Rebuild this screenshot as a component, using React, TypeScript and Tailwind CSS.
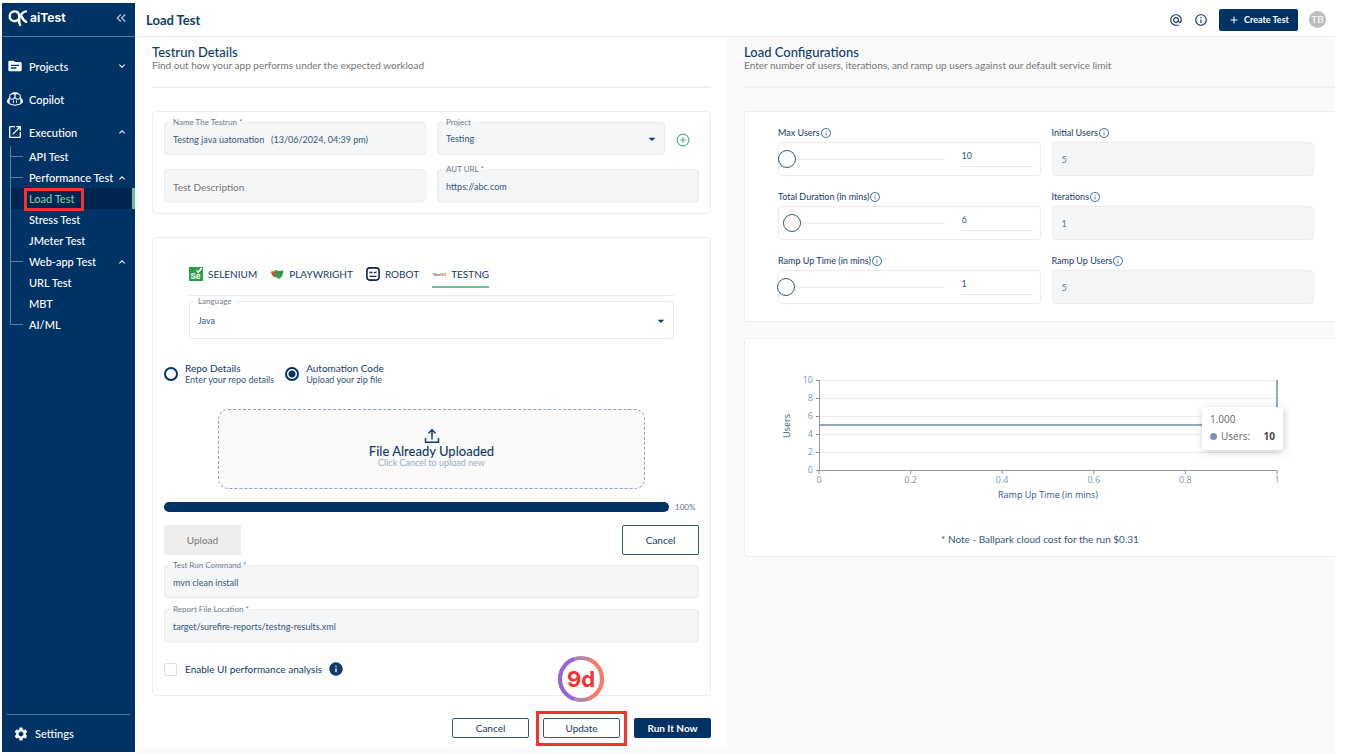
import { useState } from 'react';
import type { ReactNode } from 'react';
import {
  MdAdd,
  MdAlternateEmail,
  MdArrowDropDown,
  MdInfo,
  MdInfoOutline,
  MdKeyboardArrowDown,
  MdKeyboardArrowUp,
  MdKeyboardDoubleArrowLeft,
  MdOpenInNew,
  MdSettings,
  MdTopic,
} from 'react-icons/md';
import { GoCopilot } from 'react-icons/go';
import { CirclePlus } from 'lucide-react';
import clsx from 'clsx';

interface TreeItem {
  label: string;
  tick?: boolean;
  open?: boolean;
  active?: boolean;
}

const treeItems: TreeItem[] = [
  { label: 'API Test', tick: true },
  { label: 'Performance Test', tick: true, open: true },
  { label: 'Load Test', active: true },
  { label: 'Stress Test' },
  { label: 'JMeter Test' },
  { label: 'Web-app Test', tick: true, open: true },
  { label: 'URL Test' },
  { label: 'MBT' },
  { label: 'AI/ML', tick: true },
];

function Logo() {
  return (
    <div className="flex items-center gap-0.5 text-white">
      <svg viewBox="0 0 20 18" className="h-[18px] w-5" fill="none" stroke="currentColor" strokeWidth="2.4" strokeLinecap="round" strokeLinejoin="round">
        <path d="M10.800 10C9.600 11.500 8.200 12.200 6.500 12.200 3.700 12.200 1.700 10 1.700 7.200S3.700 2.400 6.500 2.400s4.500 2 4.700 4.800v5.400c0 1.600.2 2.600 1 3.400" />
        <path d="M18 2.400c-3 .2-4.400 2.200-6.600 5.400M13.200 6.800c1.200 2.800 2.200 4.800 5 6" />
      </svg>
      <span className="font-[Inter,sans-serif] text-[12px] leading-4 font-bold">aiTest</span>
    </div>
  );
}

function NavRow({ icon, label, chevron }: { icon: ReactNode; label: string; chevron?: ReactNode }) {
  return (
    <a href="#" className="flex h-7 items-center pr-[7px] pl-[5px]">
      {icon}
      <span className="ml-1.5 flex-1">{label}</span>
      {chevron}
    </a>
  );
}

function TreeRow({ item, last }: { item: TreeItem; last: boolean }) {
  return (
    <li className={clsx('flex h-[21px] items-center', item.active && 'border-r-[3px] border-[#66c299] bg-[#00264f]')}>
      <span
        className={clsx(
          'flex w-[13px] items-center border-l border-[#5c7da0]',
          last ? 'h-1/2 self-start border-b' : 'h-full'
        )}
      >
        {item.tick && !last && <span className="h-px w-full bg-[#5c7da0]" />}
      </span>
      <a href="#" className={clsx('relative ml-1.5 flex-1', item.active && 'text-[#7fcaa8]')}>
        {item.label}
        {item.active && <span className="absolute -top-[3px] -left-[5px] h-[23px] w-[60px] border-3 border-[#f93131]" />}
      </a>
      {item.open && <MdKeyboardArrowUp className="mr-[7px] h-3 w-3" />}
    </li>
  );
}

function Sidebar() {
  return (
    <aside className="mb-0.5 flex w-[133px] shrink-0 flex-col bg-[#003365] text-[11px] leading-[15px] font-medium text-white">
      <div className="flex h-[34px] items-center justify-between border-b border-[#5c7da0] px-1.5 pb-1">
        <Logo />
        <button aria-label="Collapse menu">
          <MdKeyboardDoubleArrowLeft className="h-4 w-4 text-[#b3c3d4]" />
        </button>
      </div>
      <nav className="flex flex-1 flex-col pt-[15px]">
        <div className="flex flex-col gap-[5px]">
          <NavRow icon={<MdTopic className="h-4 w-4" />} label="Projects" chevron={<MdKeyboardArrowDown className="h-3 w-3" />} />
          <NavRow icon={<GoCopilot className="h-4 w-4" />} label="Copilot" />
          <NavRow icon={<MdOpenInNew className="h-4 w-4" />} label="Execution" chevron={<MdKeyboardArrowUp className="h-3 w-3" />} />
        </div>
        <ul className="pl-2">
          {treeItems.map((item, i) => (
            <TreeRow key={item.label} item={item} last={i === treeItems.length - 1} />
          ))}
        </ul>
      </nav>
      <a href="#" className="mx-[5px] flex h-[38px] items-center border-t border-[#4f7297] pl-1.5">
        <MdSettings className="h-4 w-4" />
        <span className="ml-1.5">Settings</span>
      </a>
    </aside>
  );
}

function TopBar() {
  return (
    <header className="flex h-[34px] shrink-0 items-center border-b border-[#ececec] bg-white pr-[9px] pl-[11px]">
      <h1 className="flex-1 text-[13px] leading-4 font-bold">Load Test</h1>
      <button aria-label="Contact">
        <MdAlternateEmail className="h-3.5 w-3.5" />
      </button>
      <button aria-label="Information" className="ml-[11px]">
        <MdInfoOutline className="h-3.5 w-3.5" />
      </button>
      <button className="ml-[11px] flex h-[22px] w-[79px] items-center justify-center gap-1 rounded-xs bg-[#003365] text-[9px] font-bold text-white">
        <MdAdd className="h-3 w-3" />
        Create Test
      </button>
      <span className="ml-[11px] flex h-[17px] w-[17px] items-center justify-center rounded-full bg-[#bdbdbd] text-[10px] text-white">TB</span>
    </header>
  );
}

function SectionTitle({ title, subtitle }: { title: string; subtitle: string }) {
  return (
    <div className="h-[51px] border-b-2 border-[#f1f1f1] pt-2">
      <h2 className="text-[13px] leading-[14px] font-medium">{title}</h2>
      <p className="text-[10px] leading-3 text-[#757575]">{subtitle}</p>
    </div>
  );
}

interface OutlinedProps {
  id: string;
  label: string;
  children: ReactNode;
  className?: string;
}

function Outlined({ id, label, children, className }: OutlinedProps) {
  return (
    <fieldset className={clsx('min-w-0 rounded-sm border border-[#ebebec] px-1', className)}>
      <legend className="px-1 text-[8px] leading-[9px] text-[#6f7b88]">
        <label htmlFor={id} className="block">{label}</label>
      </legend>
      {children}
    </fieldset>
  );
}

function TextField({ id, label, value }: { id: string; label: string; value: string }) {
  return (
    <Outlined id={id} label={label} className="bg-[#f5f6f8] pb-[3px]">
      <input id={id} defaultValue={value} className="block h-6 w-full bg-transparent px-1 text-[9px] text-[#33577d] outline-none" />
    </Outlined>
  );
}

interface SelectFieldProps {
  id: string;
  label: string;
  options: string[];
  className?: string;
}

function SelectField({ id, label, options, className }: SelectFieldProps) {
  return (
    <Outlined id={id} label={label} className={className}>
      <div className="relative flex h-full items-center">
        <select id={id} className="block min-h-6 w-full flex-1 appearance-none bg-transparent px-1 text-[9px] text-[#33577d] outline-none">
          {options.map((o) => (
            <option key={o}>{o}</option>
          ))}
        </select>
        <MdArrowDropDown className="pointer-events-none absolute right-0 h-4 w-4" />
      </div>
    </Outlined>
  );
}

function SeleniumIcon() {
  return (
    <svg viewBox="0 0 14 14" className="h-3.5 w-3.5">
      <path d="M0 0h14v14H0z" fill="#2f9e4b" />
      <path d="M7.6 3.4l1.6 1.9L13 .8" fill="none" stroke="#fff" strokeWidth="1.5" />
      <text x="1.5" y="12" fontSize="8" fontWeight="700" fill="#fff" fontFamily="Inter, sans-serif">Se</text>
    </svg>
  );
}

function PlaywrightIcon() {
  return (
    <svg viewBox="0 0 14 14" className="h-3.5 w-3.5">
      <path d="M.8 4.200c2 .5 4 0 5.700-.9v7C4 10.800 1.200 8 .8 4.200z" fill="#e2574c" />
      <path d="M2.300 6.500l1.600-.3M3.200 9c.6-.9 1.500-1.100 2.400-.9" stroke="#8f2c25" strokeWidth=".7" fill="none" />
      <path d="M5.300 3c2.600 1.100 5.200 1.200 8 .2.3 3.800-1.700 8.200-4.600 8.500C6 11.200 4.500 7.200 5.300 3z" fill="#2f9e4b" />
      <path d="M6.600 5.900c.6-.6 1.100-.5 1.600 0M10.200 6.100c.6-.6 1.200-.5 1.700 0" stroke="#1d6b32" strokeWidth=".6" fill="none" />
    </svg>
  );
}

function RobotIcon() {
  return (
    <svg viewBox="0 0 14 14" className="h-3.5 w-3.5" fill="none" stroke="#0f2545" strokeLinecap="round">
      <rect x=".9" y=".9" width="12.200" height="12.200" rx="3" strokeWidth="1.600" />
      <path d="M4 5.800c.4-.9 1.600-.9 2 0M8.300 5.800l1.900-.8M4 9.300h6" strokeWidth="1.300" />
    </svg>
  );
}

function TestNgIcon() {
  return (
    <svg viewBox="0 0 14 14" className="h-3.5 w-3.5">
      <text x="1" y="8.500" fontSize="4" fontWeight="700" fill="#555" fontFamily="Lato, sans-serif">
        Test<tspan fill="#e0603a">NG</tspan>
      </text>
    </svg>
  );
}

const frameworks = [
  { name: 'SELENIUM', icon: SeleniumIcon },
  { name: 'PLAYWRIGHT', icon: PlaywrightIcon },
  { name: 'ROBOT', icon: RobotIcon },
  { name: 'TESTNG', icon: TestNgIcon },
];

function FrameworkTabs() {
  const [active, setActive] = useState('TESTNG');
  return (
    <div role="tablist" className="flex gap-[13px] border-b border-[#ededed] pb-[7px]">
      {frameworks.map(({ name, icon: Icon }) => (
        <button
          key={name}
          role="tab"
          aria-selected={active === name}
          onClick={() => setActive(name)}
          className={clsx(
            'flex h-[26px] items-center gap-[5px] border-b-2 text-[10px]',
            active === name ? 'border-[#66c299]' : 'border-transparent'
          )}
        >
          <Icon />
          {name}
        </button>
      ))}
    </div>
  );
}

interface SourceOptionProps {
  id: string;
  title: string;
  hint: string;
  checked: boolean;
  onChange: () => void;
}

function SourceOption({ id, title, hint, checked, onChange }: SourceOptionProps) {
  return (
    <div className="flex items-center gap-[7px]">
      <input
        type="radio"
        id={id}
        name="source"
        checked={checked}
        onChange={onChange}
        className="h-3.5 w-3.5 appearance-none rounded-full border-2 border-[#003365] checked:bg-[radial-gradient(circle,#003365_3px,white_4px)]"
      />
      <label htmlFor={id}>
        <span className="block text-[10px] leading-[11px]">{title}</span>
        <span className="block text-[9px] leading-[11px] text-[#33577d]">{hint}</span>
      </label>
    </div>
  );
}

function UploadIcon() {
  return (
    <svg viewBox="0 0 16 16" className="h-4 w-4" fill="none" stroke="currentColor" strokeWidth="1.500" strokeLinecap="round" strokeLinejoin="round">
      <path d="M8 11V2M4.800 5L8 1.800 11.200 5" />
      <path d="M1.500 10.500v3.800h13v-3.800" />
    </svg>
  );
}

function DetailsPanel() {
  const [source, setSource] = useState('code');
  return (
    <section className="mb-1.5 flex flex-col bg-white pr-4 pl-[17px]">
      <SectionTitle title="Testrun Details" subtitle="Find out how your app performs under the expected workload" />

      <div className="mt-[23px] grid grid-cols-2 items-end gap-x-[11px] gap-y-2.5 rounded-sm border border-[#ededed] px-[11px] pt-1.5 pb-[11px]">
        <TextField id="name" label="Name The Testrun *" value="Testng java uatomation   (13/06/2024, 04:39 pm)" />
        <div className="flex items-center gap-[11px]">
          <SelectField id="project" label="Project" options={['Testing']} className="flex-1 bg-[#f5f6f8] pb-[3px]" />
          <button aria-label="Add project" className="mt-1.5 mr-[9px]">
            <CirclePlus className="h-3.5 w-3.5 text-[#4db788]" strokeWidth={2} />
          </button>
        </div>
        <input
          aria-label="Test Description"
          placeholder="Test Description"
          className="h-[33px] rounded-sm border border-[#ebebec] bg-[#f5f6f8] px-2 pt-0.5 text-[10px] outline-none placeholder:text-[#757575]"
        />
        <TextField id="aut-url" label="AUT URL *" value="https://abc.com" />
      </div>

      <div className="mt-[23px] rounded-sm border border-[#ededed] px-[11px] pb-[18px]">
        <div className="px-[25px] pt-6">
          <FrameworkTabs />
          <SelectField id="language" label="Language" options={['Java']} className="mt-px pt-[3px] pb-[5px]" />
        </div>

        <div className="mt-6 flex gap-[11px]">
          <SourceOption id="repo" title="Repo Details" hint="Enter your repo details" checked={source === 'repo'} onChange={() => setSource('repo')} />
          <SourceOption id="code" title="Automation Code" hint="Upload your zip file" checked={source === 'code'} onChange={() => setSource('code')} />
        </div>

        <div className="mx-[54px] mt-6 flex h-20 flex-col items-center rounded-[10px] border border-dashed border-[#8ea3ba] bg-[#fafafa] pt-[18px]">
          <UploadIcon />
          <p className="text-[13px] leading-[14px] font-medium">File Already Uploaded</p>
          <p className="text-[9px] leading-[10px] text-[#99adc1]">Click Cancel to upload new</p>
        </div>

        <div className="mt-3 flex items-center gap-1.5">
          <div role="progressbar" aria-valuenow={100} className="h-2.5 flex-1 rounded-full bg-[#003365]" />
          <span className="w-6 text-[8px] leading-3 text-[#5c6f84]">100%</span>
        </div>

        <div className="mt-3 flex justify-between">
          <button className="h-[30px] w-[77px] rounded-xs bg-[#efeeed] text-[10px] text-[#757575]">Upload</button>
          <button className="h-[30px] w-[77px] rounded-xs border border-[#33577d] text-[10px]">Cancel</button>
        </div>

        <div className="mt-1.5 flex flex-col gap-[7px]">
          <TextField id="command" label="Test Run Command *" value="mvn clean install" />
          <TextField id="report" label="Report File Location *" value="target/surefire-reports/testng-results.xml" />
        </div>

        <div className="mt-[19px] flex items-center">
          <input id="ui-perf" type="checkbox" className="h-[13px] w-[13px] appearance-none rounded-xs border border-[#dedede] checked:bg-[#003365]" />
          <label htmlFor="ui-perf" className="ml-2 text-[10px] leading-4">Enable UI performance analysis</label>
          <MdInfo className="ml-1.5 h-4 w-4" />
        </div>
      </div>

      <div className="flex justify-end gap-3.5 pt-[22px] pb-2.5 text-[10px]">
        <button className="h-5 w-[77px] rounded-xs border border-[#33577d]">Cancel</button>
        <div className="relative flex">
          <button className="h-5 w-[77px] rounded-xs border border-[#33577d]">Update</button>
          <span className="pointer-events-none absolute -top-[7px] -left-[7px] h-[35px] w-[91px] border-3 border-[#f93131]" />
          <StepBadge />
        </div>
        <button className="h-5 w-[77px] rounded-xs bg-[#003365] font-bold text-white">Run It Now</button>
      </div>
    </section>
  );
}

function StepBadge() {
  return (
    <div className="absolute bottom-9 left-[15px] flex h-[46px] w-[46px] items-center justify-center">
      <svg viewBox="0 0 46 46" className="absolute inset-0" fill="white" strokeWidth="4">
        <circle cx="23" cy="23" r="21" stroke="#b088aa" />
        <path d="M16 3.200a21 21 0 0 0 0 39.600" stroke="#9463e0" />
        <path d="M30 3.200a21 21 0 0 1 0 39.600" stroke="#fb7c66" />
      </svg>
      <span className="relative font-[Inter,sans-serif] text-[22px] leading-6 font-bold text-[#f93131]">9d</span>
    </div>
  );
}

interface SliderFieldProps {
  id: string;
  label: string;
  initial: number;
  max: number;
}

function ConfigLabel({ id, label }: { id: string; label: string }) {
  return (
    <div className="flex h-[18px] items-center">
      <label htmlFor={id} className="text-[9px] leading-3">{label}</label>
      <MdInfoOutline className="h-3 w-3 text-[#5f84a8]" />
    </div>
  );
}

function SliderField({ id, label, initial, max }: SliderFieldProps) {
  const [value, setValue] = useState(initial);
  return (
    <div>
      <ConfigLabel id={id} label={label} />
      <div className="flex h-[34px] items-center rounded-sm border border-[#ededed] pr-[7px]">
        <input
          type="range"
          aria-label={label}
          min={1}
          max={max}
          value={value}
          onChange={(e) => setValue(Number(e.target.value))}
          className="-ml-0.5 h-[18px] min-w-0 flex-1 appearance-none bg-transparent [&::-webkit-slider-runnable-track]:h-0.5 [&::-webkit-slider-runnable-track]:bg-[linear-gradient(to_right,transparent_14px,#f1f2f3_14px)] [&::-webkit-slider-thumb]:-mt-2 [&::-webkit-slider-thumb]:h-[18px] [&::-webkit-slider-thumb]:w-[18px] [&::-webkit-slider-thumb]:appearance-none [&::-webkit-slider-thumb]:rounded-full [&::-webkit-slider-thumb]:border [&::-webkit-slider-thumb]:border-[#33577d] [&::-webkit-slider-thumb]:bg-white"
        />
        <input
          id={id}
          value={value}
          onChange={(e) => setValue(Number(e.target.value) || 1)}
          className="mb-1 ml-[17px] h-[19px] w-[71px] border-b border-[#e6e6e6] pb-0.5 text-[9px] text-[#33577d] outline-none"
        />
      </div>
    </div>
  );
}

function ReadOnlyField({ id, label, value }: { id: string; label: string; value: string }) {
  return (
    <div>
      <ConfigLabel id={id} label={label} />
      <input id={id} readOnly value={value} className="block h-[34px] w-full rounded-sm border border-[#ededed] bg-[#f5f6f8] px-[9px] text-[9px] text-[#5c7590] outline-none" />
    </div>
  );
}

const yTicks = [0, 2, 4, 6, 8, 10];
const xTicks = [0, 0.2, 0.4, 0.6, 0.8, 1];

function UsersChart() {
  const left = 74;
  const right = 532;
  const bottom = 131;
  const y = (v: number) => bottom - v * 9;
  const x = (v: number) => left + v * (right - left);
  return (
    <div className="relative">
      <svg viewBox="0 0 590 165" className="w-full" fontFamily="Open Sans, Noto Sans, sans-serif" fontSize="9">
        {yTicks.map((t) => (
          <g key={t}>
            {t > 0 && <path d={`M${left} ${y(t) + 0.5}H${right}`} stroke="#ebedf2" />}
            <path d={`M${left - 3} ${y(t) + 0.5}H${left}`} stroke="#8a8f96" />
            <text x={left - 6} y={y(t) + 3} textAnchor="end" fill="#7b97b5">{t}</text>
          </g>
        ))}
        {xTicks.map((t) => (
          <g key={t}>
            <path d={`M${x(t)} ${bottom}v4`} stroke="#8a8f96" />
            <text x={x(t)} y={bottom + 13} textAnchor="middle" fill="#7b97b5">{t}</text>
          </g>
        ))}
        <path d={`M${left + 0.5} ${y(10)}V${bottom + 0.5}H${right}`} fill="none" stroke="#9a9a9a" />
        <path d={`M${left} ${y(5)}H${right}V${y(10)}`} fill="none" stroke="#6f8cb0" strokeWidth="1.500" />
        <text x="303" y="159" textAnchor="middle" fill="#33577d">Ramp Up Time (in mins)</text>
        <text x="45" y="87" textAnchor="middle" fill="#33577d" transform="rotate(-90 45 87)">Users</text>
      </svg>
      <div className="absolute top-[68px] right-[52px] h-[43px] w-[81px] rounded-xs bg-white px-2 pt-[5px] font-['Open_Sans','Noto_Sans',sans-serif] text-[10px] leading-[14px] text-[#666] shadow-[1px_2px_8px_rgba(0,0,0,0.2)]">
        <p>1.000</p>
        <p className="mt-[3px] flex items-center">
          <span className="mr-1 h-[7px] w-[7px] rounded-full bg-[#7b92b5]" />
          Users:
          <b className="ml-auto font-bold text-[#464646]">10</b>
        </p>
      </div>
    </div>
  );
}

function ConfigPanel() {
  return (
    <section className="flex flex-col pl-[17px]">
      <SectionTitle title="Load Configurations" subtitle="Enter number of users, iterations, and ramp up users against our default service limit" />

      <div className="mt-[23px] grid grid-cols-2 gap-x-[11px] gap-y-3 rounded-l-sm border border-r-0 border-[#ededed] bg-white pt-3 pr-[21px] pb-[17px] pl-[33px]">
        <SliderField id="max-users" label="Max Users" initial={10} max={1000} />
        <ReadOnlyField id="initial-users" label="Initial Users" value="5" />
        <SliderField id="duration" label="Total Duration (in mins)" initial={6} max={120} />
        <ReadOnlyField id="iterations" label="Iterations" value="1" />
        <SliderField id="ramp-time" label="Ramp Up Time (in mins)" initial={1} max={60} />
        <ReadOnlyField id="ramp-users" label="Ramp Up Users" value="5" />
      </div>

      <div className="mt-4 rounded-l-sm border border-r-0 border-[#ededed] bg-white pb-[9px]">
        <UsersChart />
        <p className="mt-[27px] text-center text-[10px] leading-4 text-[#33577d]">* Note - Ballpark cloud cost for the run $0.31</p>
      </div>
    </section>
  );
}

export default function App() {
  return (
    <div className="flex min-h-screen bg-white pt-[3px] pr-[17px] pl-0.5 font-[Lato,'Noto_Sans',sans-serif] text-[#123a68]">
      <Sidebar />
      <main className="flex min-w-0 flex-1 flex-col">
        <TopBar />
        <div className="grid flex-1 grid-cols-[37fr_38fr] bg-[#fafafa]">
          <DetailsPanel />
          <ConfigPanel />
        </div>
      </main>
    </div>
  );
}
